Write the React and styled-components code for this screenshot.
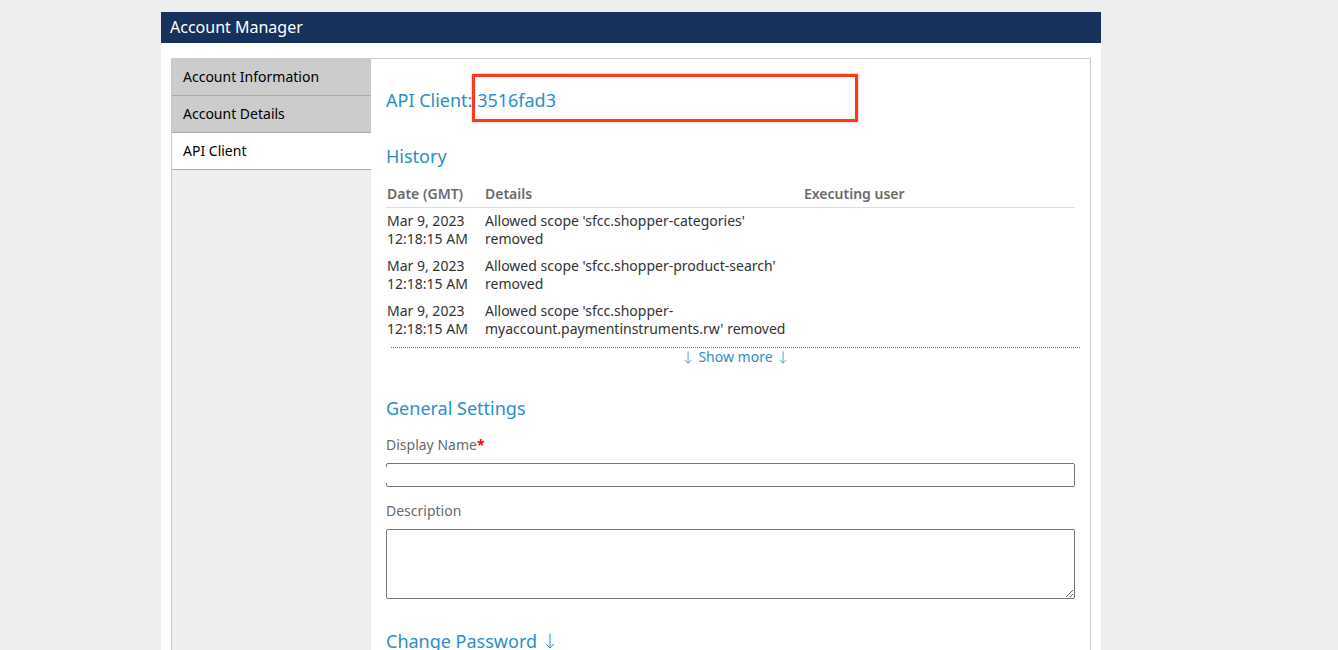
import React from 'react'
import styled, { createGlobalStyle } from 'styled-components'

const history = [
    {
        id: 1,
        date: 'Mar 9, 2023 12:18:15 AM',
        details: "Allowed scope 'sfcc.shopper-categories' removed",
        user: '',
    },
    {
        id: 2,
        date: 'Mar 9, 2023 12:18:15 AM',
        details: "Allowed scope 'sfcc.shopper-product-search' removed",
        user: '',
    },
    {
        id: 3,
        date: 'Mar 9, 2023 12:18:15 AM',
        details: "Allowed scope 'sfcc.shopper-myaccount.paymentinstruments.rw' removed",
        user: '',
    },
]

const menu = [
    { id: 1, text: 'Account Information' },
    { id: 2, text: 'Account Details' },
    { id: 3, text: 'API Client', active: true },
]

const ArrowDown = ({ size }) => (
    <Arrow viewBox="0 0 10 16" $size={size} aria-hidden="true">
        <path d="M5 0.5V15M1 11L5 15L9 11" />
    </Arrow>
)

const App = () => {
  return (
    <>
        <GlobalStyle />
        <Page>
            <Header>Account Manager</Header>
            <Panel>
                <Sidebar>
                    {
                        menu.map(({ id, text, active }) => (
                            <MenuLink key={id} href="#" $active={active}>{text}</MenuLink>
                        ))
                    }
                </Sidebar>
                <Content>
                    <ClientTitle>API Client: <ClientId>3516fad3</ClientId></ClientTitle>
                    <Section>
                        <Title>History</Title>
                        <HistoryTable>
                            <thead>
                                <tr>
                                    <th className="date">Date (GMT)</th>
                                    <th className="details">Details</th>
                                    <th>Executing user</th>
                                </tr>
                            </thead>
                            <tbody>
                                {
                                    history.map(({ id, date, details, user }) => (
                                        <tr key={id}>
                                            <td>{date}</td>
                                            <td>{details}</td>
                                            <td>{user}</td>
                                        </tr>
                                    ))
                                }
                            </tbody>
                        </HistoryTable>
                        <ShowMore type="button">
                            <ArrowDown size={13} />
                            Show more
                            <ArrowDown size={13} />
                        </ShowMore>
                    </Section>
                    <Section>
                        <Title>General Settings</Title>
                        <Label htmlFor="displayName">Display Name<b>*</b></Label>
                        <InputWrap>
                            <Input id="displayName" type="text" required />
                        </InputWrap>
                        <Label htmlFor="description">Description</Label>
                        <TextArea id="description" />
                    </Section>
                    <Title>
                        <Toggle type="button">
                            Change Password
                            <ArrowDown size={16} />
                        </Toggle>
                    </Title>
                </Content>
            </Panel>
        </Page>
    </>
  )
}

export default App

const GlobalStyle = createGlobalStyle`
    *, *::before, *::after{
        box-sizing: border-box;
    }
    html{
        scrollbar-width: none;
    }
    body{
        margin: 0;
        padding: 12px 76px 0 0;
        background-color: #eeeeee;
        color: #333333;
        font-family: "Noto Sans", "Open Sans", sans-serif;
        font-size: 14px;
        line-height: 18px;
    }
    button, input, textarea{
        font: inherit;
    }
`

const Page = styled.main`
    max-width: 940px;
    min-height: calc(100vh - 12px);
    margin: 0 auto;
    background-color: #ffffff;
    display: flex;
    flex-direction: column;
`

const Header = styled.header`
    padding: 3px 9px 4px;
    background-color: #16325c;
    color: #ffffff;
    font-size: 16px;
    line-height: 24px;
`

const Panel = styled.div`
    flex: 1;
    display: flex;
    margin: 15px 10px;
    border: 1px solid #cccccc;
`

const Sidebar = styled.nav`
    flex: 0 0 199px;
    background-color: #eeeeee;
`

const MenuLink = styled.a`
    display: block;
    padding: 9px 11px;
    border-bottom: 1px solid #aaaaaa;
    background-color: ${({ $active }) => ($active ? '#ffffff' : '#cccccc')};
    color: #000000;
    text-decoration: none;
`

const Content = styled.div`
    flex: 1;
    min-width: 0;
    padding: 29px 15px;
    display: flex;
    flex-direction: column;
    gap: 30px;
`

const Title = styled.h2`
    margin: 0;
    color: #2a8fc8;
    font-size: 18px;
    font-weight: 400;
    line-height: 24px;
`

const ClientTitle = styled(Title)`
    margin-bottom: 2px;
`

const Section = styled.section`
    ${Title}{
        margin-bottom: 16px;
    }
`

const ClientId = styled.span`
    position: relative;
    &::after{
        content: '';
        position: absolute;
        top: -14px;
        left: -5px;
        width: 386px;
        height: 48px;
        border: 3px solid #fb3b1e;
        box-shadow: 0 0 1px #fb3b1e;
    }
`

const HistoryTable = styled.table`
    width: 100%;
    border-collapse: collapse;
    table-layout: fixed;
    th{
        padding: 1px 1px 4px;
        border-bottom: 1px solid #dddddd;
        color: #6b6b6b;
        font-weight: 600;
        text-align: left;
    }
    .date{
        width: 98px;
    }
    .details{
        width: 319px;
    }
    td{
        padding: 4px 12px 5px 1px;
        vertical-align: top;
    }
`

const ShowMore = styled.button`
    display: flex;
    justify-content: center;
    align-items: center;
    gap: 6px;
    width: 100%;
    margin: 4px -5px 0 5px;
    padding: 0;
    border: 0;
    border-top: 1px dotted #3a7f9f;
    background: none;
    color: #2a8fc8;
    cursor: pointer;
`

const Arrow = styled.svg`
    height: ${({ $size }) => $size}px;
    fill: none;
    stroke: currentColor;
    stroke-width: 1;
`

const Label = styled.label`
    display: block;
    margin: 15px 0 9px;
    color: #6b6b6b;
    b{
        color: #ff0000;
    }
`

const InputWrap = styled.div`
    position: relative;
    display: flex;
    /* open middle part of the left edge */
    &::before{
        content: '';
        position: absolute;
        top: 4px;
        bottom: 4px;
        left: 0;
        width: 1px;
        background-color: #ffffff;
    }
`

const Input = styled.input`
    width: 100%;
    height: 24px;
    padding: 2px 4px;
    border: 1px solid #767676;
    border-radius: 2px;
`

const TextArea = styled.textarea`
    display: block;
    width: 100%;
    height: 70px;
    padding: 2px 4px;
    border: 1px solid #767676;
    border-radius: 2px;
    resize: vertical;
`

const Toggle = styled.button`
    display: flex;
    align-items: center;
    gap: 8px;
    padding: 0;
    border: 0;
    background: none;
    color: inherit;
    cursor: pointer;
`
